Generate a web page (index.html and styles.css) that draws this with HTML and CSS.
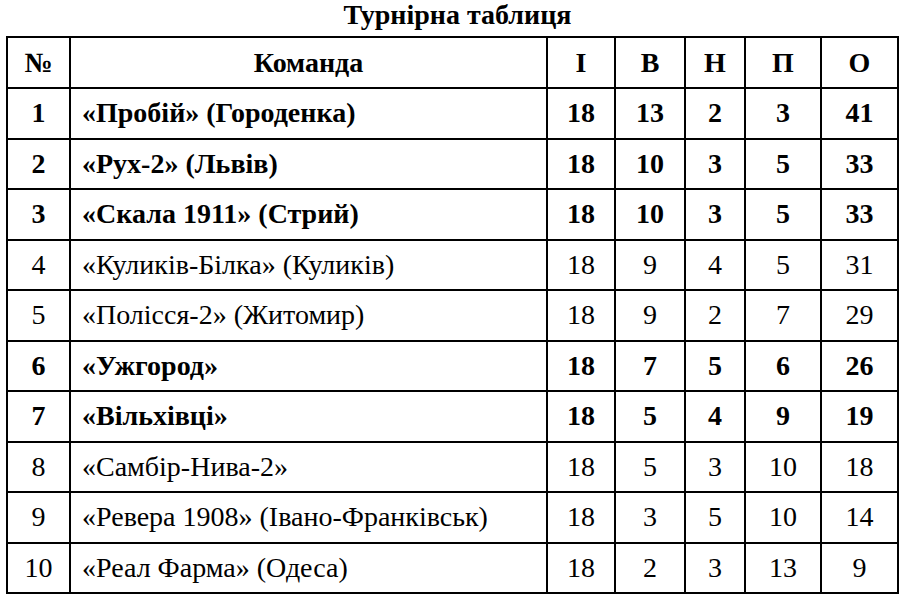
FILE: index.html
```html
<!DOCTYPE html>
<html lang="uk">
<head>
<meta charset="utf-8">
<title>Турнірна таблиця</title>
<link rel="stylesheet" href="styles.css">
</head>
<body class="page">
<div class="wrap">
  <div class="title">Турнірна таблиця</div>
  <table class="standings">
    <colgroup>
      <col class="c-num"><col class="c-team"><col class="c-g"><col class="c-w"><col class="c-d"><col class="c-l"><col class="c-p">
    </colgroup>
    <thead>
      <tr class="head"><th>№</th><th>Команда</th><th>І</th><th>В</th><th>Н</th><th>П</th><th>О</th></tr>
    </thead>
    <tbody>
      <tr class="b"><td>1</td><td class="team">«Пробій» (Городенка)</td><td>18</td><td>13</td><td>2</td><td>3</td><td>41</td></tr>
      <tr class="b"><td>2</td><td class="team">«Рух-2» (Львів)</td><td>18</td><td>10</td><td>3</td><td>5</td><td>33</td></tr>
      <tr class="b"><td>3</td><td class="team">«Скала 1911» (Стрий)</td><td>18</td><td>10</td><td>3</td><td>5</td><td>33</td></tr>
      <tr><td>4</td><td class="team">«Куликів-Білка» (Куликів)</td><td>18</td><td>9</td><td>4</td><td>5</td><td>31</td></tr>
      <tr><td>5</td><td class="team">«Полісся-2» (Житомир)</td><td>18</td><td>9</td><td>2</td><td>7</td><td>29</td></tr>
      <tr class="b"><td>6</td><td class="team">«Ужгород»</td><td>18</td><td>7</td><td>5</td><td>6</td><td>26</td></tr>
      <tr class="b"><td>7</td><td class="team">«Вільхівці»</td><td>18</td><td>5</td><td>4</td><td>9</td><td>19</td></tr>
      <tr><td>8</td><td class="team">«Самбір-Нива-2»</td><td>18</td><td>5</td><td>3</td><td>10</td><td>18</td></tr>
      <tr><td>9</td><td class="team">«Ревера 1908» (Івано-Франківськ)</td><td>18</td><td>3</td><td>5</td><td>10</td><td>14</td></tr>
      <tr><td>10</td><td class="team">«Реал Фарма» (Одеса)</td><td>18</td><td>2</td><td>3</td><td>13</td><td>9</td></tr>
    </tbody>
  </table>
</div>
</body>
</html>
```
FILE: styles.css
```css
html, body {
  margin: 0;
  padding: 0;
  background: #fff;
  color: #000;
}
.page,
.title,
.standings,
.standings th,
.standings td {
  font-family: "Liberation Serif", "Times New Roman", Times, serif;
  font-size: 28px;
}
.wrap {
  width: 893px;
  margin-left: 6px;
}
.title {
  font-weight: bold;
  text-align: center;
  line-height: 30px;
  padding-left: 10px;
  margin-bottom: 6px;
}
.standings {
  width: 893px;
  table-layout: fixed;
  border-collapse: separate;
  border-spacing: 0;
  border-top: 2px solid #000;
  border-left: 2px solid #000;
}
.c-num { width: 63px; }
.c-team { width: 477px; }
.c-g { width: 68px; }
.c-w { width: 70px; }
.c-d { width: 60px; }
.c-l { width: 76px; }
.c-p { width: 77px; }
.standings th,
.standings td {
  border-right: 2px solid #000;
  border-bottom: 2px solid #000;
  padding: 0;
  text-align: center;
  vertical-align: middle;
  height: 48.5px;
  line-height: 30px;
  font-weight: normal;
}
.standings th {
  font-weight: bold;
  height: 49px;
}
.standings td.team {
  text-align: left;
  padding-left: 11px;
}
.standings tr.b td {
  font-weight: bold;
}
```
